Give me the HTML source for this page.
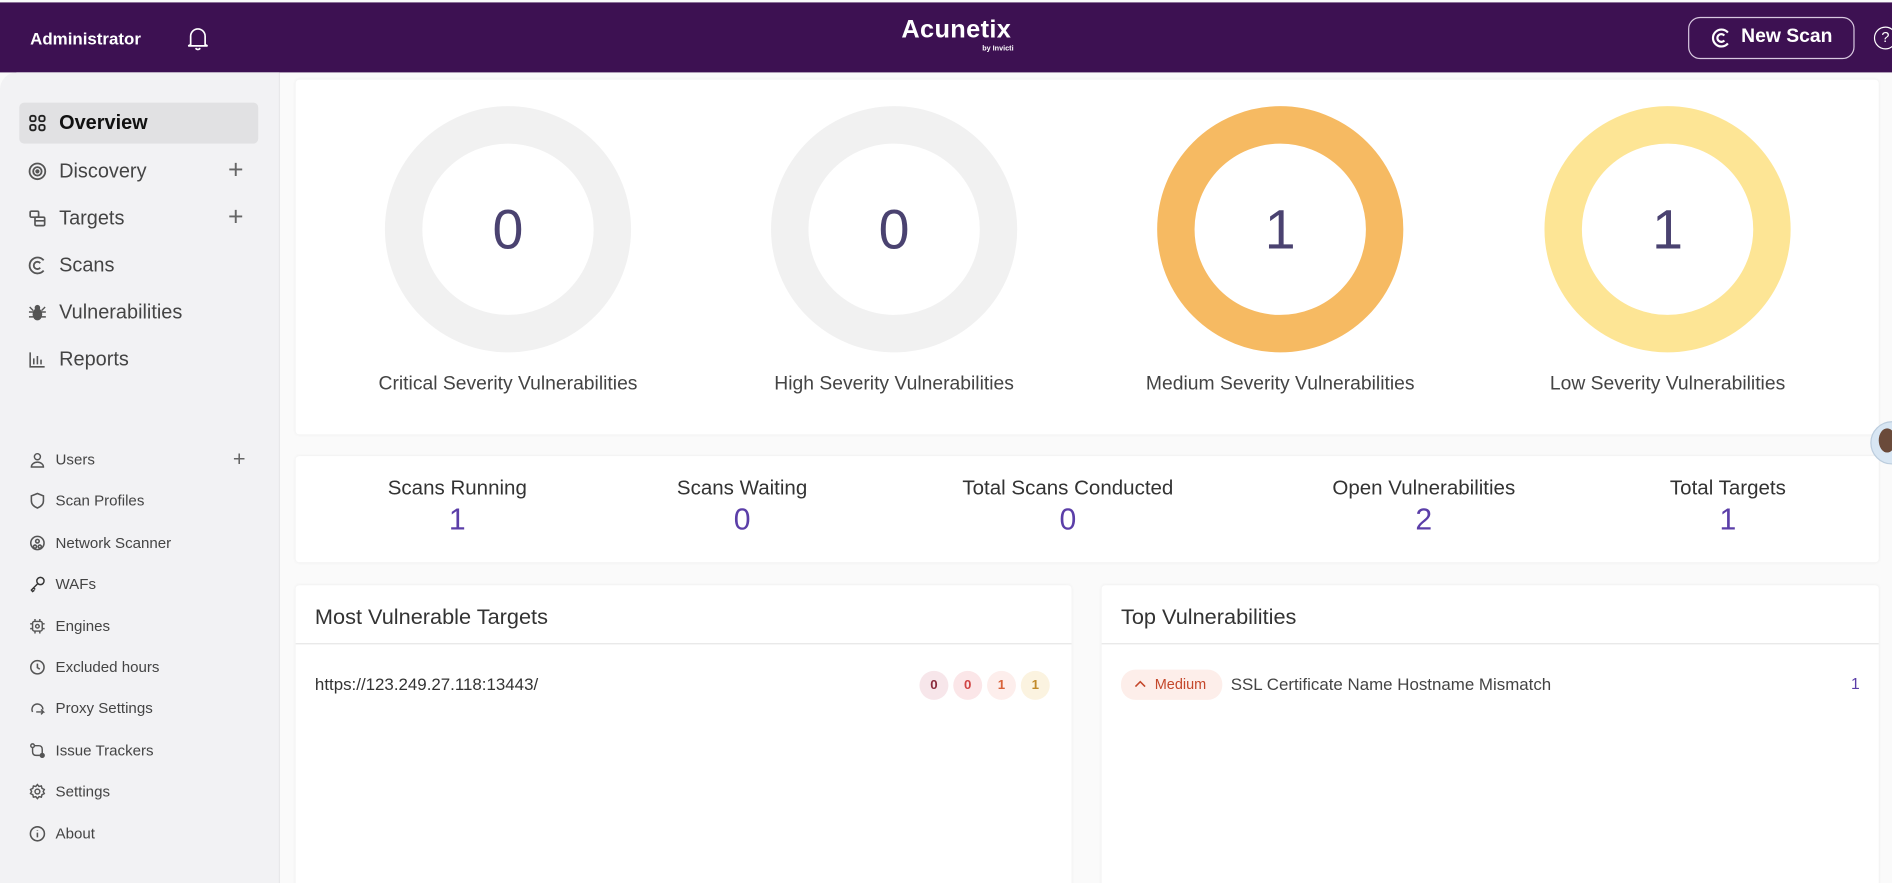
<!DOCTYPE html>
<html><head><meta charset="utf-8">
<style>
html,body{margin:0;padding:0;width:1892px;height:883px;overflow:hidden;background:#fff;font-family:"Liberation Sans",sans-serif;}
#w{position:absolute;left:0;top:0;width:1568px;height:732px;transform:scale(1.20663);transform-origin:0 0;background:#fafafa;overflow:hidden}
.a{position:absolute}
.hdr{left:0;top:2px;width:1568px;height:58px;background:#3d1152}
.sb{left:0;top:60px;width:231px;height:672px;background:#f2f2f4;border-right:1px solid #e6e6e8;border-top-left-radius:14px}
.card{background:#fff;box-shadow:0 0 3px rgba(0,0,0,.06);border-radius:3px}
.nav{position:absolute;left:23px;font-size:16.5px;color:#444;display:flex;align-items:center;height:20px}
.nav svg{margin-right:10px}
.sn{position:absolute;left:24px;font-size:12.5px;color:#444;display:flex;align-items:center;height:16px}
.sn svg{margin-right:8px}
.plus{position:absolute;font-size:22px;color:#666;font-weight:300}
.donut{position:absolute;width:204px;height:204px;border-radius:50%;box-sizing:border-box;border:31px solid #f1f1f1;display:flex;align-items:center;justify-content:center;font-size:46px;color:#4a4270}
.lbl{position:absolute;width:300px;text-align:center;font-size:16px;color:#444}
.st{position:absolute;width:240px;text-align:center}
.st .t{font-size:17px;color:#333}
.st .n{font-size:25px;color:#5b3ea8;margin-top:2px}
.b{position:absolute;top:0;width:24px;height:24px;border-radius:50%;text-align:center;line-height:24px;font-size:11px;font-weight:bold}
</style></head><body><div id="w">
<div class="a hdr"></div>
<div class="a" style="left:25px;top:24px;color:#fff;font-weight:bold;font-size:14px">Administrator</div>
<svg class="a" style="left:155px;top:21px" width="18" height="22" viewBox="0 0 18 22" fill="none" stroke="#fff" stroke-width="1.4"><path d="M3 16V9a6 6 0 0 1 12 0v7l2 1H1z"/><path d="M7 19q2 2 4 0"/></svg>
<div class="a" style="left:747px;top:13px;color:#fff;font-weight:bold;font-size:21px;letter-spacing:.3px">Acunetix</div>
<div class="a" style="left:814px;top:38px;color:#fff;font-weight:bold;font-size:6px">by Invicti</div>
<div class="a" style="left:1399px;top:14px;width:138px;height:35px;border:1px solid #d8c8e0;border-radius:10px;box-sizing:border-box"></div>
<svg class="a" style="left:1418px;top:23px" width="17" height="17" viewBox="0 0 17 17" fill="none" stroke="#fff" stroke-width="1.8"><path d="M14 4A7 7 0 1 0 14 13"/><path d="M11 6.5A3.2 3.2 0 1 0 11 10.5"/></svg>
<div class="a" style="left:1443px;top:22px;color:#fff;font-weight:bold;font-size:16px">New Scan</div>
<div class="a" style="left:1553px;top:22px;width:17px;height:17px;border:1.5px solid #fff;border-radius:50%;color:#fff;font-size:12px;line-height:17px;text-align:center">?</div>

<div class="a sb"></div>
<div class="a" style="left:16px;top:85px;width:198px;height:34px;background:#e1e1e3;border-radius:4px"></div>
<div class="nav" style="top:92px;color:#111;font-weight:bold"><svg width="16" height="16" viewBox="0 0 16 16" fill="none" stroke="#222" stroke-width="1.5"><rect x="2" y="2" width="4.5" height="4.5" rx="1.5"/><rect x="9.5" y="2" width="4.5" height="4.5" rx="1.5"/><rect x="2" y="9.5" width="4.5" height="4.5" rx="1.5"/><rect x="9.5" y="9.5" width="4.5" height="4.5" rx="1.5"/></svg>Overview</div>
<div class="nav" style="top:132px"><svg width="16" height="16" viewBox="0 0 16 16" fill="none" stroke="#555" stroke-width="1.5"><circle cx="8" cy="8" r="6.5"/><circle cx="8" cy="8" r="3.5"/><circle cx="8" cy="8" r="1" fill="#555"/></svg>Discovery</div>
<div class="plus" style="left:189px;top:128px">+</div>
<div class="nav" style="top:171px"><svg width="16" height="16" viewBox="0 0 16 16" fill="none" stroke="#555" stroke-width="1.4"><rect x="2" y="2" width="7" height="5" rx="1"/><rect x="6" y="7" width="8" height="7" rx="1"/><path d="M6 10h8"/></svg>Targets</div>
<div class="plus" style="left:189px;top:167px">+</div>
<div class="nav" style="top:210px"><svg width="16" height="16" viewBox="0 0 17 17" fill="none" stroke="#555" stroke-width="1.6"><path d="M14 4A7 7 0 1 0 14 13"/><path d="M11 6.5A3.2 3.2 0 1 0 11 10.5"/></svg>Scans</div>
<div class="nav" style="top:249px"><svg width="16" height="16" viewBox="0 0 16 16" fill="#555"><ellipse cx="8" cy="9.5" rx="4" ry="5"/><circle cx="8" cy="4" r="2.3"/><path d="M1 7h14v1.2H1zM1 11h14v1.2H1zM2 3l3 3-.8.8-3-3zM14 3l-3 3 .8.8 3-3z"/></svg>Vulnerabilities</div>
<div class="nav" style="top:288px"><svg width="16" height="16" viewBox="0 0 16 16" fill="none" stroke="#555" stroke-width="1.3"><path d="M2 2v12h12M5 12V7M8 12V5M11 12V8"/></svg>Reports</div>

<div class="sn" style="top:373px"><svg width="14" height="14" viewBox="0 0 14 14" fill="none" stroke="#555" stroke-width="1.2"><circle cx="7" cy="4.5" r="2.5"/><path d="M2 13a5 4 0 0 1 10 0z"/></svg>Users</div>
<div class="plus" style="left:193px;top:370px;font-size:18px">+</div>
<div class="sn" style="top:407px"><svg width="14" height="14" viewBox="0 0 14 14" fill="none" stroke="#555" stroke-width="1.3"><path d="M7 1l5 2v4c0 3-2.5 5-5 6C4.5 12 2 10 2 7V3z"/></svg>Scan Profiles</div>
<div class="sn" style="top:442px"><svg width="14" height="14" viewBox="0 0 14 14" fill="none" stroke="#555" stroke-width="1.3"><circle cx="7" cy="7" r="5.5"/><circle cx="7" cy="5.5" r="1.5"/><circle cx="5" cy="10" r="1.3"/><circle cx="9" cy="10" r="1.3"/></svg>Network Scanner</div>
<div class="sn" style="top:476px"><svg width="14" height="14" viewBox="0 0 14 14" fill="none" stroke="#333" stroke-width="1.2"><circle cx="9.5" cy="4.5" r="3"/><path d="M7.5 6.5L2 12l1 1.2 1.5-1M4 10.5l1.2 1"/></svg>WAFs</div>
<div class="sn" style="top:511px"><svg width="14" height="14" viewBox="0 0 14 14" fill="none" stroke="#555" stroke-width="1.2"><rect x="3" y="3" width="8" height="8" rx="1.5"/><circle cx="7" cy="7" r="1.5"/><path d="M5 1v2M9 1v2M5 11v2M9 11v2M1 5h2M1 9h2M11 5h2M11 9h2"/></svg>Engines</div>
<div class="sn" style="top:545px"><svg width="14" height="14" viewBox="0 0 14 14" fill="none" stroke="#555" stroke-width="1.3"><circle cx="7" cy="7" r="5.5"/><path d="M7 4v3.3l2 1.3"/></svg>Excluded hours</div>
<div class="sn" style="top:579px"><svg width="14" height="14" viewBox="0 0 14 14" fill="none" stroke="#555" stroke-width="1.2"><path d="M3 10a4.5 4.5 0 1 1 8.5-2"/><path d="M6 10h6l-2-2M12 10l-2 2"/></svg>Proxy Settings</div>
<div class="sn" style="top:614px"><svg width="14" height="14" viewBox="0 0 14 14" fill="none" stroke="#555" stroke-width="1.2"><circle cx="3" cy="3" r="1.5"/><circle cx="11" cy="11" r="1.6" fill="#555"/><path d="M3 4.5V8q0 3 3 3h3M11 9.5V6q0-3-3-3H5"/></svg>Issue Trackers</div>
<div class="sn" style="top:648px"><svg width="14" height="14" viewBox="0 0 14 14" fill="none" stroke="#555" stroke-width="1.2"><circle cx="7" cy="7" r="2"/><path d="M7 1.2l1.3 1.6 2-.4.5 2 1.9.9-.9 1.7.9 1.7-1.9.9-.5 2-2-.4L7 12.8l-1.3-1.6-2 .4-.5-2-1.9-.9.9-1.7-.9-1.7 1.9-.9.5-2 2 .4z"/></svg>Settings</div>
<div class="sn" style="top:683px"><svg width="14" height="14" viewBox="0 0 14 14" fill="none" stroke="#555" stroke-width="1.3"><circle cx="7" cy="7" r="5.8"/><path d="M7 6v4M7 4v.5"/></svg>About</div>

<div class="a card" style="left:245px;top:66px;width:1312px;height:294px"></div>
<div class="donut" style="left:319px;top:88px">0</div>
<div class="donut" style="left:639px;top:88px">0</div>
<div class="donut" style="left:959px;top:88px;border-color:#f6ba62">1</div>
<div class="donut" style="left:1280px;top:88px;border-color:#fde595">1</div>
<div class="lbl" style="left:271px;top:310px">Critical Severity Vulnerabilities</div>
<div class="lbl" style="left:591px;top:310px">High Severity Vulnerabilities</div>
<div class="lbl" style="left:911px;top:310px">Medium Severity Vulnerabilities</div>
<div class="lbl" style="left:1232px;top:310px">Low Severity Vulnerabilities</div>

<div class="a card" style="left:245px;top:378px;width:1312px;height:88px"></div>
<div class="st" style="left:259px;top:395px"><div class="t">Scans Running</div><div class="n">1</div></div>
<div class="st" style="left:495px;top:395px"><div class="t">Scans Waiting</div><div class="n">0</div></div>
<div class="st" style="left:765px;top:395px"><div class="t">Total Scans Conducted</div><div class="n">0</div></div>
<div class="st" style="left:1060px;top:395px"><div class="t">Open Vulnerabilities</div><div class="n">2</div></div>
<div class="st" style="left:1312px;top:395px"><div class="t">Total Targets</div><div class="n">1</div></div>

<div class="a card" style="left:245px;top:485px;width:643px;height:260px"></div>
<div class="a" style="left:261px;top:501px;font-size:18px;color:#333">Most Vulnerable Targets</div>
<div class="a" style="left:245px;top:533px;width:643px;height:1px;background:#e6e6e6"></div>
<div class="a" style="left:261px;top:559px;font-size:14px;color:#333">https://123.249.27.118:13443/</div>
<div class="a" style="left:762px;top:556px;width:110px;height:24px">
<span class="b" style="left:0;background:#f7e6ea;color:#8a2b3c">0</span><span class="b" style="left:28px;background:#fbe6e8;color:#d04444">0</span><span class="b" style="left:56px;background:#fdeeec;color:#d8633a">1</span><span class="b" style="left:84px;background:#fbf3e0;color:#c18a2a">1</span></div>

<div class="a card" style="left:913px;top:485px;width:644px;height:260px"></div>
<div class="a" style="left:929px;top:501px;font-size:18px;color:#333">Top Vulnerabilities</div>
<div class="a" style="left:913px;top:533px;width:644px;height:1px;background:#e6e6e6"></div>
<div class="a" style="left:929px;top:555px;width:84px;height:25px;border-radius:12px;background:#fdeeea"></div>
<svg class="a" style="left:940px;top:563px" width="10" height="8" viewBox="0 0 10 8" fill="none" stroke="#c4472b" stroke-width="1.3"><path d="M1 6l4-4 4 4"/></svg>
<div class="a" style="left:957px;top:560px;color:#c4472b;font-size:12px">Medium</div>
<div class="a" style="left:1020px;top:559px;font-size:14px;color:#444">SSL Certificate Name Hostname Mismatch</div>
<div class="a" style="left:1534px;top:559px;font-size:13px;color:#5b3ea8">1</div>

<div class="a" style="left:1550px;top:349px;width:34px;height:34px;border-radius:50%;background:#d8e6f3;border:1px solid #bcd"></div>
<div class="a" style="left:1557px;top:355px;width:14px;height:20px;border-radius:50%;background:#6a4a3a"></div>
</div></body></html>
